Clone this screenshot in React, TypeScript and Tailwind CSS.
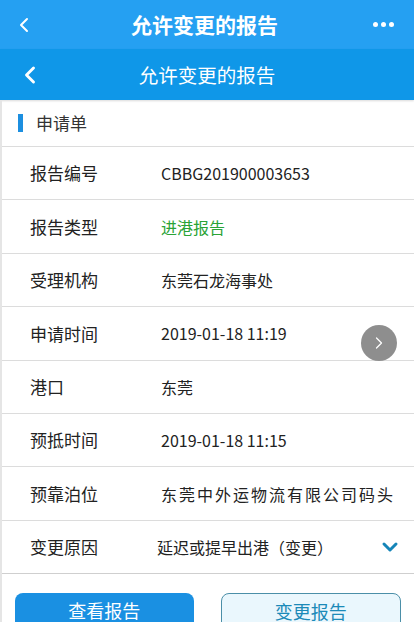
import { ChevronLeft, ChevronRight, ChevronDown } from "lucide-react"

const rows: { label: string; value: string; green?: boolean; wide?: boolean }[] = [
  { label: "报告编号", value: "CBBG201900003653" },
  { label: "报告类型", value: "进港报告", green: true },
  { label: "受理机构", value: "东莞石龙海事处" },
  { label: "申请时间", value: "2019-01-18 11:19" },
  { label: "港口", value: "东莞" },
  { label: "预抵时间", value: "2019-01-18 11:15" },
  { label: "预靠泊位", value: "东莞中外运物流有限公司码头", wide: true },
]

export default function App() {
  return (
    <div
      className="relative h-[622px] w-[414px] overflow-hidden bg-white"
      style={{ fontFamily: '"Noto Sans CJK SC", "Noto Sans", sans-serif' }}
    >
      {/* outer app bar */}
      <div className="flex h-[49px] items-center bg-[#25a0f2] px-3 text-white">
        <ChevronLeft className="h-6 w-6" strokeWidth={2} />
        <div className="flex-1 text-center text-[21px] font-bold">允许变更的报告</div>
        <div className="flex items-center gap-[3px] pr-2">
          <span className="h-[5px] w-[5px] rounded-full bg-white" />
          <span className="h-[5px] w-[5px] rounded-full bg-white" />
          <span className="h-[5px] w-[5px] rounded-full bg-white" />
        </div>
      </div>

      {/* page header */}
      <div className="flex h-[51px] items-center bg-[#0f97e8] px-4 text-white shadow-[0_1px_2px_rgba(0,0,0,0.15)]">
        <ChevronLeft className="h-7 w-7" strokeWidth={2.5} />
        <div className="flex-1 pr-7 text-center text-[19.5px]">允许变更的报告</div>
      </div>

      <div className="border-l-2 border-[#e5e5e5]">
        <div className="flex h-[47px] items-center border-b border-[#dcdcdc] pl-4">
          <span className="mr-[13px] h-[18px] w-[5px] bg-[#1c8fe0]" />
          <span className="text-[17px] text-[#333]">申请单</span>
        </div>

        {rows.map((r) => (
          <div key={r.label} className="flex h-[53.4px] items-center border-b border-[#dcdcdc]">
            <div className="w-[159px] pl-7 text-[17px] text-[#222]">{r.label}</div>
            <div
              className={
                r.green
                  ? "text-[16px] text-[#2aa336]"
                  : r.wide
                    ? "text-[16px] tracking-[2px] text-[#222]"
                    : "text-[16px] text-[#222]"
              }
            >
              {r.value}
            </div>
          </div>
        ))}

        <div className="flex h-[53.4px] items-center border-b border-[#cfcfcf]">
          <div className="w-[155px] pl-7 text-[17px] text-[#222]">变更原因</div>
          <div className="flex-1 text-[16px] text-[#222]">延迟或提早出港（变更）</div>
          <ChevronDown className="mr-[12px] h-6 w-6 text-[#1585b8]" strokeWidth={3} />
        </div>

        <div className="flex gap-[27px] px-[13px] pt-[19px]">
          <button className="flex h-[44px] flex-1 items-start justify-center rounded-[8px] bg-[#1a90e2] pt-[4px] text-[18px] text-white">
            查看报告
          </button>
          <button className="flex h-[44px] flex-1 items-start justify-center rounded-[8px] border border-[#4b8fa8] bg-[#eaf7fd] pt-[4px] text-[18px] text-[#1b8ab8]">
            变更报告
          </button>
        </div>
      </div>

      {/* floating next button */}
      <div className="absolute left-[361px] top-[325px] flex h-[36px] w-[36px] items-center justify-center rounded-full bg-[#8e8e8e]">
        <ChevronRight className="h-5 w-5 text-white" strokeWidth={1.5} />
      </div>
    </div>
  )
}
